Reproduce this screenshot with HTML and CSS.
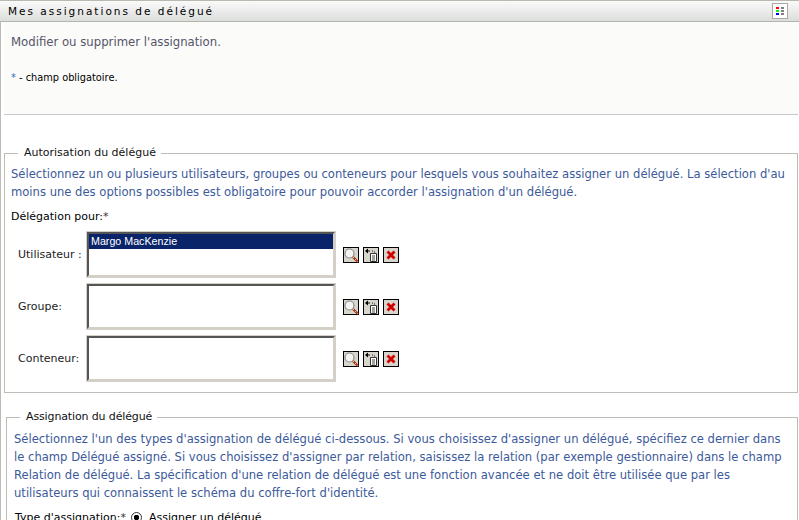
FILE: index.html
```html
<!DOCTYPE html>
<html lang="fr">
<head>
<meta charset="utf-8">
<title>Mes assignations de délégué</title>
<link rel="stylesheet" href="styles.css">
</head>
<body>
<div class="portlet">
  <header class="titlebar">
    <h1 class="title">Mes assignations de délégué</h1>
    <span class="menu-btn">
      <svg width="16" height="16" viewBox="0 0 16 16"><rect x=".5" y=".5" width="15" height="15" fill="#fff" stroke="#a8a8a8"/><rect x="4" y="4" width="3" height="2" fill="#f00"/><rect x="9" y="4" width="3" height="2" fill="#808080"/><rect x="4" y="7" width="3" height="2" fill="#0f0"/><rect x="9" y="7" width="3" height="2" fill="#808080"/><rect x="4" y="10" width="3" height="2" fill="#00f"/><rect x="9" y="10" width="3" height="2" fill="#808080"/></svg>
    </span>
  </header>
  <main class="content">
  <section class="intro">
    <p class="intro-text">Modifier ou supprimer l'assignation.</p>
    <p class="required"><span class="star">*</span> - champ obligatoire.</p>
  </section>
  <fieldset class="group group-first">
    <legend>Autorisation du délégué</legend>
    <p class="help">Sélectionnez un ou plusieurs utilisateurs, groupes ou conteneurs pour lesquels vous souhaitez assigner un délégué. La sélection d'au moins une des options possibles est obligatoire pour pouvoir accorder l'assignation d'un délégué.</p>
    <div class="field-label">Délégation pour:<span class="star-dark">*</span></div>
    <div class="row">
      <label class="row-label">Utilisateur :</label>
      <div class="listbox"><div class="option">Margo MacKenzie</div></div>
      <div class="icons">
        <svg class="ico" viewBox="0 0 16 16"><use href="#i-search"/></svg>
        <svg class="ico" viewBox="0 0 16 16"><use href="#i-add"/></svg>
        <svg class="ico" viewBox="0 0 16 16"><use href="#i-del"/></svg>
      </div>
    </div>
    <div class="row">
      <label class="row-label">Groupe:</label>
      <div class="listbox"></div>
      <div class="icons">
        <svg class="ico" viewBox="0 0 16 16"><use href="#i-search"/></svg>
        <svg class="ico" viewBox="0 0 16 16"><use href="#i-add"/></svg>
        <svg class="ico" viewBox="0 0 16 16"><use href="#i-del"/></svg>
      </div>
    </div>
    <div class="row">
      <label class="row-label">Conteneur:</label>
      <div class="listbox"></div>
      <div class="icons">
        <svg class="ico" viewBox="0 0 16 16"><use href="#i-search"/></svg>
        <svg class="ico" viewBox="0 0 16 16"><use href="#i-add"/></svg>
        <svg class="ico" viewBox="0 0 16 16"><use href="#i-del"/></svg>
      </div>
    </div>
  </fieldset>
  <fieldset class="group group-second">
    <legend>Assignation du délégué</legend>
    <p class="help">Sélectionnez l'un des types d'assignation de délégué ci-dessous. Si vous choisissez d'assigner un délégué, spécifiez ce dernier dans le champ Délégué assigné. Si vous choisissez d'assigner par relation, saisissez la relation (par exemple gestionnaire) dans le champ Relation de délégué. La spécification d'une relation de délégué est une fonction avancée et ne doit être utilisée que par les utilisateurs qui connaissent le schéma du coffre-fort d'identité.</p>
    <div class="type-row">
      <span class="type-label">Type d'assignation:<span class="star-dark">*</span></span>
      <span class="radio"></span>
      <span>Assigner un délégué</span>
    </div>
  </fieldset>
  </main>
</div>
<svg class="defs" width="0" height="0">
  <defs>
    <g id="i-search">
      <rect x=".5" y=".5" width="15" height="15" fill="#d8d6cc" stroke="#000"/>
      <circle cx="6.500" cy="6.500" r="4.500" fill="#f4f4f4" stroke="#8a8a8a" stroke-width="1.200"/>
      <path d="M10 10l5 5" stroke="#a02c1c" stroke-width="2.200"/>
      <path d="M10 10l5 5" stroke="#f0d060" stroke-width="1" stroke-dasharray="1.500 1.500"/>
    </g>
    <g id="i-add">
      <rect x=".5" y=".5" width="15" height="15" fill="#d8d6cc" stroke="#000"/>
      <path d="M7.500 6.500h6v8h-6z" fill="#fff" stroke="#333"/>
      <path d="M9 9h3M9 11h3M9 13h3" stroke="#444"/>
      <path d="M2 4l3-2.500v5z" fill="#000"/>
      <path d="M5 4h2M9 4h1M11 5h1" stroke="#111"/>
    </g>
    <g id="i-del">
      <rect x=".5" y=".5" width="15" height="15" fill="#d8d6cc" stroke="#000"/>
      <path d="M4.500 4.500l7 7M11.500 4.500l-7 7" stroke="#d40000" stroke-width="2.800"/>
    </g>
  </defs>
</svg>
</body>
</html>
```
FILE: styles.css
```css
html, body { margin: 0; padding: 0; background: #fff; }
body { width: 799px; height: 520px; overflow: hidden; font-family: "DejaVu Sans", sans-serif; font-size: 11px; color: #000; }
.portlet { border-top: 1px solid #b9b9b1; }
.titlebar { height: 20px; padding: 0 11px 0 8px; display: flex; align-items: center; justify-content: space-between; background: linear-gradient(#fafafa, #dcdedb); border-bottom: 1px solid #b5b5b0; }
.title { margin: 0; font: 400 10.500px "DejaVu Sans", sans-serif; letter-spacing: 2px; }
.menu-btn { display: flex; width: 16px; height: 16px; }
.content { border-left: 1px solid #bdbdb8; }
.intro { margin-left: 3px; margin-right: 1px; height: 80px; background: #fbfbf9; border-bottom: 1px solid #c8c8c8; padding: 12px 0 0 7px; }
.intro-text { margin: 0; font-size: 11.700px; line-height: 16px; color: #55556a; }
.required { margin: 21px 0 0; font-size: 9.800px; line-height: 14px; }
.star { color: #2a6db5; }
.star-dark { color: #333; }
.group { margin: 0; padding: 0; border: 1px solid #bdbdb8; min-width: 0; }
.group legend { margin-left: 13px; padding: 0 5px 0 6px; font-size: 11px; line-height: 14px; color: #111; }
.group-first { margin: 31px 1px 0 3px; height: 245px; }
.group-second { margin: 17px 1px 0 5px; }
.group-second legend { letter-spacing: -0.13px; }
.help { margin: 5px 0 0; padding: 0 0 0 6px; font-size: 11.590px; line-height: 18px; color: #3c5a9a; }
.group-second .help { width: 776px; margin-top: 6px; padding-left: 7px; }
.field-label { margin: 8px 0 3px 6px; line-height: 16px; }
.row { display: flex; align-items: center; height: 52px; }
.row-label { width: 68px; padding-left: 13px; color: #222; }
.listbox { box-sizing: border-box; width: 248px; height: 45px; margin-left: 1px; background: #fff; border: 2px solid; border-color: #555 #d4d0c8 #d4d0c8 #555; outline: 1px solid #d4d0c8; }
.option { background: #0a246a; color: #fff; font: 10.700px/15px "Liberation Sans", sans-serif; padding-left: 2px; }
.icons { display: flex; gap: 4px; margin: 1px 0 0 8px; }
.ico { width: 16px; height: 16px; display: block; }
.type-row { display: flex; align-items: center; margin: 9px 0 0 8px; }
.type-label { width: 116px; }
.radio { width: 11px; height: 11px; margin-right: 7px; border: 1px solid #333; border-radius: 50%; box-sizing: border-box; background: radial-gradient(circle, #000 0 2.500px, #fff 3px); }
.defs { position: absolute; }
```
